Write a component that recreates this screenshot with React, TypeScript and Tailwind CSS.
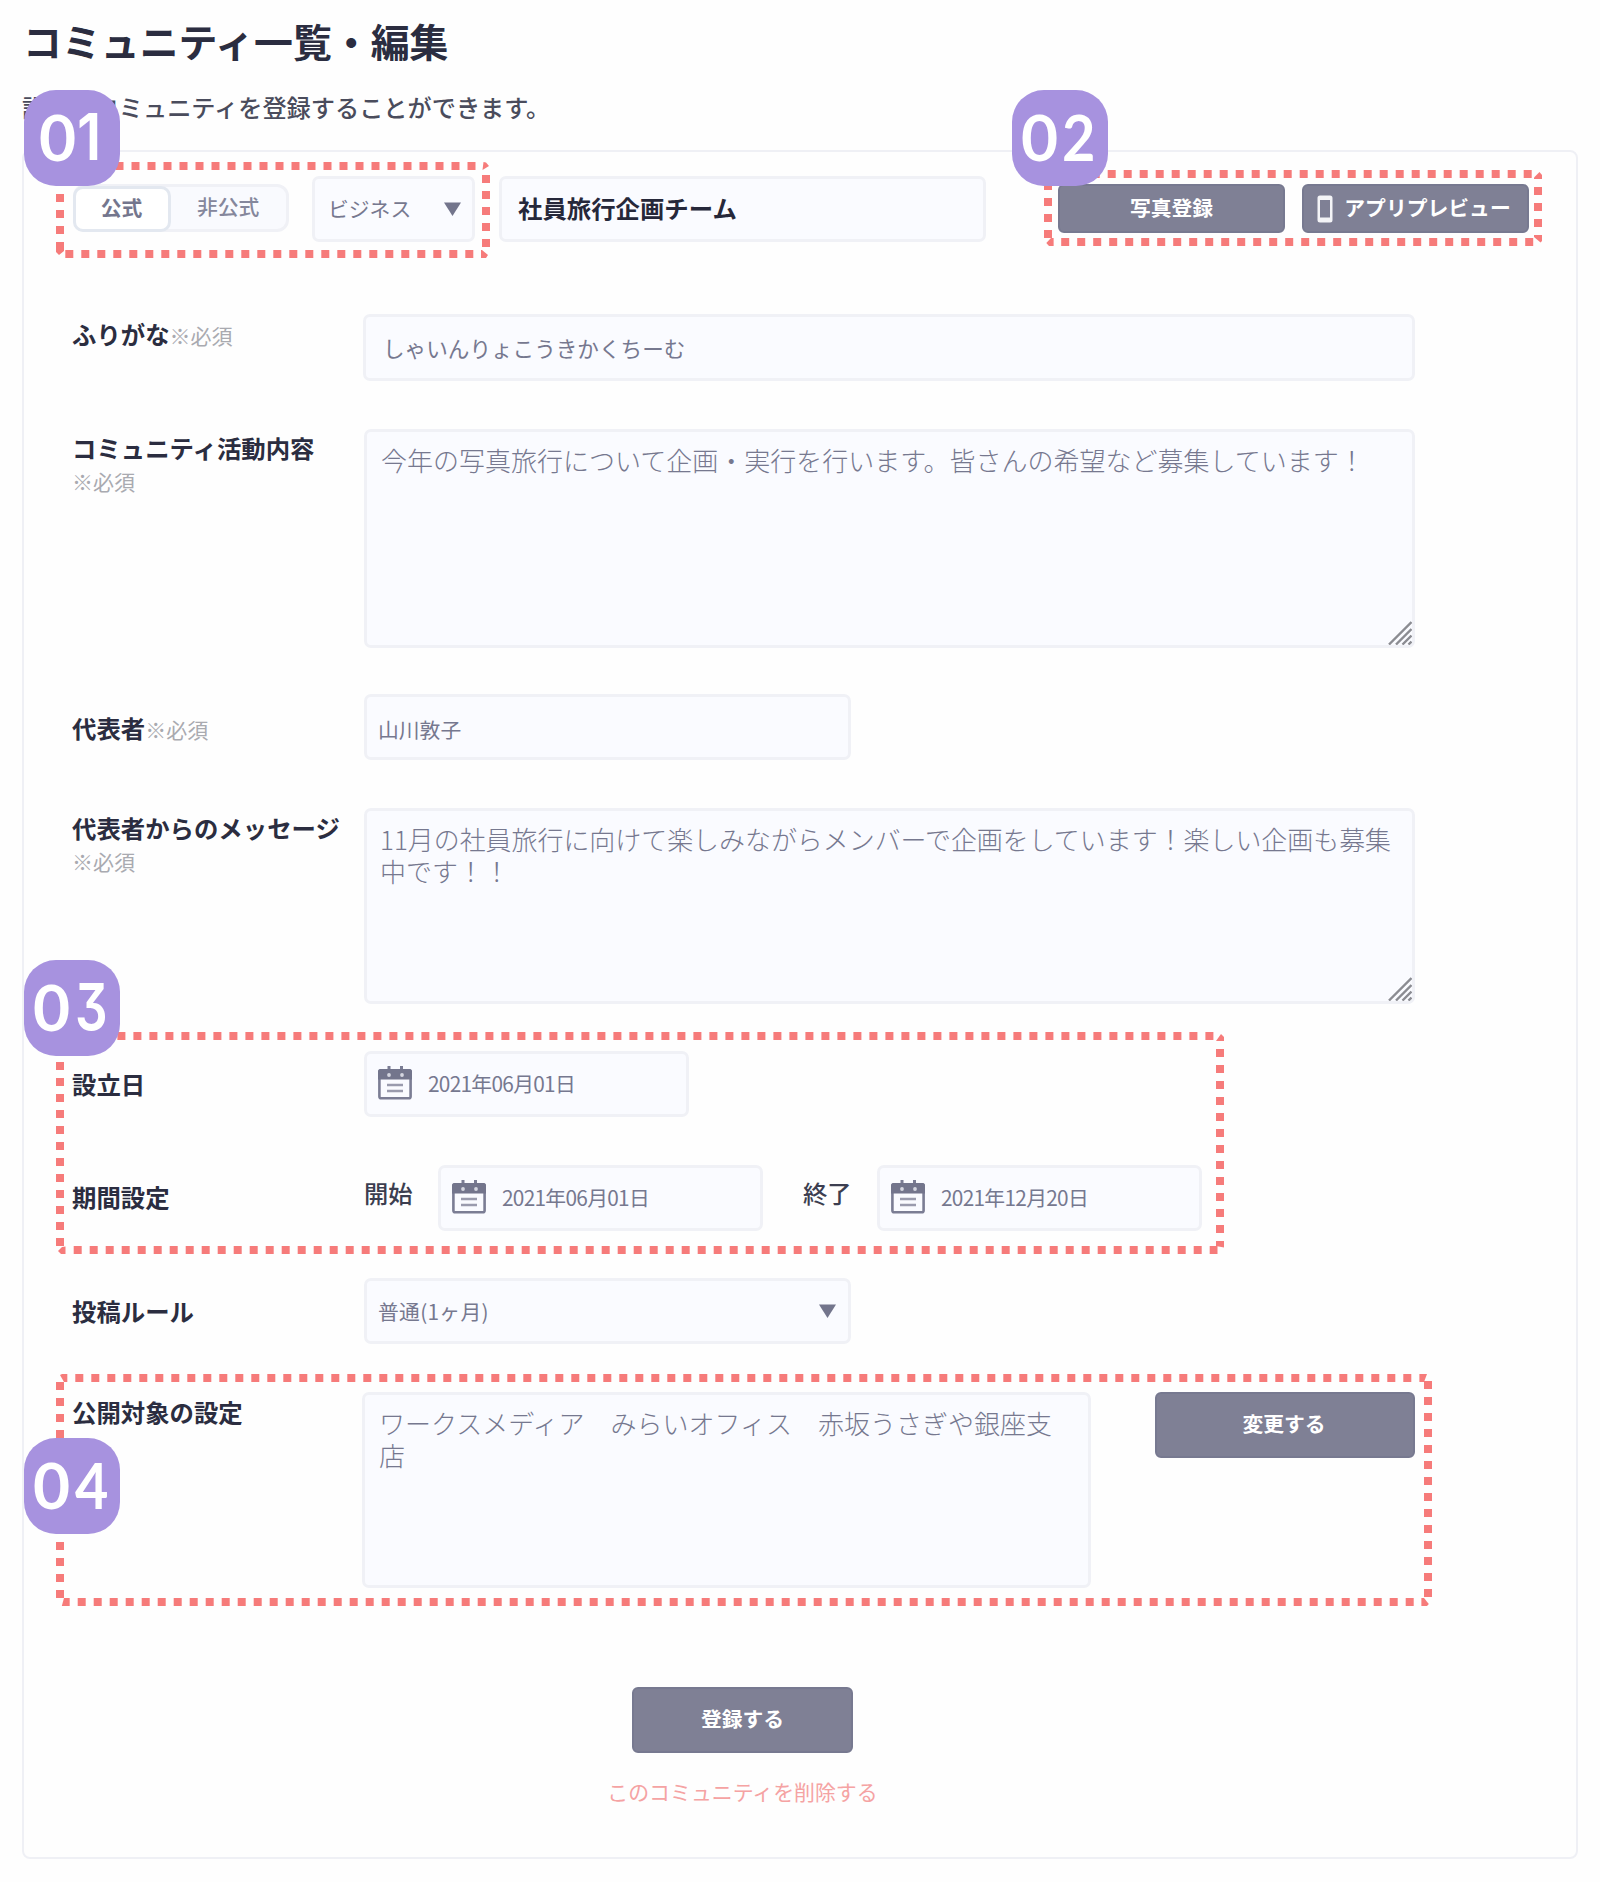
import type { ReactNode } from "react";

const CORAL = "#f67b7a";

function Label({ children, note, noteBelow, className }: { children: ReactNode; note?: boolean; noteBelow?: boolean; className: string }) {
  return (
    <div className={`w-[291px] shrink-0 whitespace-nowrap text-[24.4px] leading-[28px] font-bold text-[#2b2d40] ${className}`}>
      {children}
      {note && <span className="text-[21px] font-normal text-[#a9aab0]">※必須</span>}
      {noteBelow && <div className="mt-[5px] text-[21px] leading-[28px] font-normal text-[#a9aab0]">※必須</div>}
    </div>
  );
}

function Field({ children, className }: { children?: ReactNode; className: string }) {
  return (
    <div className={`relative shrink-0 rounded-[7px] border-[3px] border-[#f0f1f6] bg-[#fafbff] whitespace-nowrap text-[#76788f] ${className}`}>
      {children}
    </div>
  );
}

function Button({ children, className }: { children: ReactNode; className: string }) {
  return (
    <button className={`flex shrink-0 items-center justify-center rounded-[6px] border-2 border-[#777990] bg-[#7f8095] text-[20.8px] leading-[24px] font-bold whitespace-nowrap text-white ${className}`}>
      {children}
    </button>
  );
}

function Triangle() {
  return (
    <svg width="17" height="14" viewBox="0 0 17 14" className="shrink-0">
      <path d="M0 0.5H17L8.5 14Z" fill="#73758c" />
    </svg>
  );
}

function ResizeGrip() {
  return (
    <svg width="24" height="24" viewBox="0 0 24 24" className="absolute right-0 bottom-0" stroke="#8b8c92" strokeWidth="2.4">
      <path d="M1 23.5L23.500 1M8 23.500L23.500 8M14.500 23.500L23.500 14.500M20.500 23.500L23.500 20.500" />
    </svg>
  );
}

function CalendarIcon() {
  return (
    <svg width="34" height="34" viewBox="0 0 34 34" className="shrink-0">
      <path d="M9.500 0h3v4h-3zM22 0h3v4h-3z" fill="#7b7d94" />
      <rect x="1.400" y="4.400" width="31.200" height="27.800" rx="1.800" fill="none" stroke="#7b7d94" strokeWidth="2.600" />
      <path d="M0 5.500Q0 3 2.500 3H31.500Q34 3 34 5.500V13.500H0Z" fill="#73758c" />
      <circle cx="11" cy="9" r="1.900" fill="#d5d6e0" />
      <circle cx="24" cy="9" r="1.900" fill="#d5d6e0" />
      <path d="M9 19h16M9 25h16" stroke="#9a9bad" strokeWidth="2.600" />
    </svg>
  );
}

function DateField({ value }: { value: string }) {
  return (
    <Field className="flex h-[66px] w-[325px] items-center gap-[16px] pb-[2px] pl-[11px] text-[20.8px] leading-[24px] tracking-[-0.7px]">
      <CalendarIcon />
      <span className="-mt-px">{value}</span>
    </Field>
  );
}

function PhoneIcon() {
  return (
    <svg width="16" height="28" viewBox="0 0 16 28" className="shrink-0">
      <path fillRule="evenodd" fill="#f4f4f7" d="M3 0.500H13Q15.500 0.500 15.500 3V25Q15.500 27.500 13 27.500H3Q0.500 27.500 0.500 25V3Q0.500 0.500 3 0.500ZM3 5V22.500H13V5Z" />
    </svg>
  );
}

function Badge({ className, children }: { className: string; children: ReactNode }) {
  return (
    <div className={`absolute h-24 w-24 rounded-[32px] bg-[#a792df] text-[64px] leading-[93px] font-bold text-white ${className}`}>
      {children}
    </div>
  );
}

function Digit({ className, children }: { className: string; children: string }) {
  return <span className={`absolute top-0 origin-left ${className}`}>{children}</span>;
}

/* Dotted highlight frames drawn over the form */
const sides = [
  "M115.500 166H475.700", "M486 175V247", "M65.300 254H473.500", "M60 194V250",
  "M1091.700 174H1532", "M1538 187V227", "M1061.200 242H1534.300", "M1048 182V238",
  "M117.400 1036H1213.500", "M1220 1049V1241", "M73.700 1250H1217.500", "M60 1062V1246",
  "M75.300 1378H1411.500", "M1428 1381V1597", "M77.700 1602H1413.700", "M60 1382V1598",
];
const corners = [
  "483.500,162 486,162.500 489,166 482.500,170",
  "481,250 482,250 488,255 486,258 481,258",
  "56,242 64,242 64,251 59,255 56,252",
  "1534,179 1534,177.500 1539.500,172 1542,175 1542,179",
  "1534,235 1542,235 1542,241 1540.500,242.500 1534,237",
  "1046.300,243 1051,238 1053.600,238 1053.600,246 1049,246",
  "1216,1041 1221,1034 1224,1037 1224,1041",
  "1216,1241 1224,1241 1224,1247.500 1216,1246",
  "58,1251 62,1247 65.500,1246.500 65.500,1254 61,1254",
  "60,1375 62,1374 67.300,1374 67.300,1382 64,1382",
  "1419.400,1374 1427,1374 1424,1382 1419.400,1382",
  "64,1598 69.700,1598 69.700,1606 61.800,1606",
  "1421.400,1598 1424,1598 1428.800,1604 1427,1606 1421.400,1606",
];

function Highlights() {
  return (
    <svg width="1600" height="1882" viewBox="0 0 1600 1882" className="pointer-events-none absolute top-0 left-0">
      {sides.map((d) => (
        <path key={d} d={d} stroke={CORAL} strokeWidth="8" strokeDasharray="8 8" />
      ))}
      {corners.map((p) => (
        <polygon key={p} points={p} fill={CORAL} />
      ))}
    </svg>
  );
}

export default function App() {
  return (
    <div className="relative h-[1882px] w-[1600px] overflow-hidden bg-[#fefefe] font-['Noto_Sans_CJK_JP',sans-serif]">
      <h1 className="ml-[23px] pt-[16px] text-[38.9px] leading-[48px] font-bold whitespace-nowrap text-[#2b2d40]">コミュニティ一覧・編集</h1>
      <p className="mt-[28px] ml-[22px] text-[24.2px] leading-[30px] font-medium whitespace-nowrap text-[#4a4c5c]">設定中コミュニティを登録することができます。</p>

      <main className="mt-[28px] ml-[22px] h-[1709px] w-[1556px] rounded-[8px] border-2 border-[#eff0f5] pl-[48px]">
        <div className="mt-[24px] flex h-[66px]">
          <div className="mt-[8px] ml-px flex h-[48px] w-[216px] rounded-[12px] border-[3px] border-[#f0f1f6] bg-[#f9fafe] text-[20.8px] leading-[36px] text-[#85879c]">
            <div className="-mt-px -ml-[3px] h-[46px] w-[98px] rounded-[10px] border-[3px] border-[#e3e8f0] bg-white pr-px text-center font-bold text-[#74768d]">公式</div>
            <div className="ml-[26px] leading-[38px] font-medium">非公式</div>
          </div>
          <Field className="ml-[23px] flex h-[66px] w-[163px] items-center justify-between pr-[11px] pl-[13px] text-[20.8px] leading-[24px]">
            <span className="-mt-[3px]">ビジネス</span>
            <Triangle />
          </Field>
          <Field className="ml-[24px] flex h-[66px] w-[487px] items-center pb-[2px] pl-[16px] text-[24.4px] leading-[28px] font-bold">
            <span className="text-[#26283a]">社員旅行企画チーム</span>
          </Field>
          <Button className="mt-[8px] ml-[72px] h-[49px] w-[227px] pb-[3px]">写真登録</Button>
          <Button className="mt-[8px] ml-[17px] h-[49px] w-[227px] gap-[11px] pr-[3px]">
            <PhoneIcon />
            <span className="-mt-[3px]">アプリプレビュー</span>
          </Button>
        </div>

        <div className="mt-[72px] flex">
          <Label note className="pt-[6px]">ふりがな</Label>
          <Field className="h-[67px] w-[1052px] pt-[17px] pl-[17px] text-[21.6px] leading-[28px]">しゃいんりょこうきかくちーむ</Field>
        </div>

        <div className="mt-[48px] flex">
          <Label noteBelow className="pt-[5px]">コミュニティ活動内容</Label>
          <Field className="ml-px h-[219px] w-[1051px] pt-[12px] pl-[14px] text-[26px] leading-[31.500px] font-light">
            今年の写真旅行について企画・実行を行います。皆さんの希望など募集しています！
            <ResizeGrip />
          </Field>
        </div>

        <div className="mt-[46px] flex">
          <Label note className="pt-[20px]">代表者</Label>
          <Field className="ml-px h-[66px] w-[487px] pt-[19px] pl-[11px] text-[20.8px] leading-[26px]">山川敦子</Field>
        </div>

        <div className="mt-[48px] flex">
          <Label noteBelow className="pt-[6px]">代表者からのメッセージ</Label>
          <Field className="ml-px h-[196px] w-[1051px] pt-[12px] pl-[13px] text-[25.95px] leading-[31.500px] font-light">
            11月の社員旅行に向けて楽しみながらメンバーで企画をしています！楽しい企画も募集
            <br />
            中です！！
            <ResizeGrip />
          </Field>
        </div>

        <div className="mt-[47px] flex">
          <Label className="mr-px pt-[19px]">設立日</Label>
          <DateField value="2021年06月01日" />
        </div>

        <div className="mt-[48px] flex text-[24.3px] leading-[28px] text-[#3c3e50]">
          <Label className="mr-px pt-[18px]">期間設定</Label>
          <div className="w-[74px] pt-[14px] font-medium">開始</div>
          <DateField value="2021年06月01日" />
          <div className="ml-[40px] w-[74px] pt-[14px] font-medium">終了</div>
          <DateField value="2021年12月20日" />
        </div>

        <div className="mt-[47px] flex">
          <Label className="mr-px pt-[19px]">投稿ルール</Label>
          <Field className="flex h-[66px] w-[487px] items-center justify-between pr-[12px] pl-[11px] text-[20.8px] leading-[24px]">
            <span className="-mt-px tracking-[0.3px]">普通(1ヶ月)</span>
            <Triangle />
          </Field>
        </div>

        <div className="mt-[48px] flex">
          <Label className="-mr-px pt-[6px]">公開対象の設定</Label>
          <Field className="h-[196px] w-[729px] pt-[12px] pl-[14px] text-[26px] leading-[31.500px] font-light">
            ワークスメディア　みらいオフィス　赤坂うさぎや銀座支
            <br />店
          </Field>
          <Button className="ml-[64px] h-[66px] w-[260px] pr-[2px] pb-[4px]">変更する</Button>
        </div>

        <div className="mt-[99px] flex w-[1341px] flex-col items-center">
          <Button className="h-[66px] w-[221px] pb-[4px]">登録する</Button>
          <a className="mt-[24px] text-[20.9px] leading-[28px] whitespace-nowrap text-[#f5a3a3]">このコミュニティを削除する</a>
        </div>
      </main>

      <Highlights />

      <Badge className="top-[90px] left-[24px]">
        <Digit className="left-[15px] font-[Lato]">0</Digit>
        <Digit className="left-[53px] scale-x-90 font-[Inter] font-semibold">1</Digit>
      </Badge>
      <Badge className="top-[90px] left-[1012px]">
        <Digit className="left-[9px] font-[Lato]">0</Digit>
        <Digit className="left-[50px] scale-x-90 font-[Lato]">2</Digit>
      </Badge>
      <Badge className="top-[960px] left-[24px]">
        <Digit className="left-[9px] font-[Lato]">0</Digit>
        <Digit className="left-[51px] scale-x-[0.8] font-[Inter] font-semibold [font-feature-settings:'cv09']">3</Digit>
      </Badge>
      <Badge className="top-[1438px] left-[24px]">
        <Digit className="left-[9px] font-[Lato]">0</Digit>
        <Digit className="left-[51px] scale-x-90 font-[Lato]">4</Digit>
      </Badge>
    </div>
  );
}
